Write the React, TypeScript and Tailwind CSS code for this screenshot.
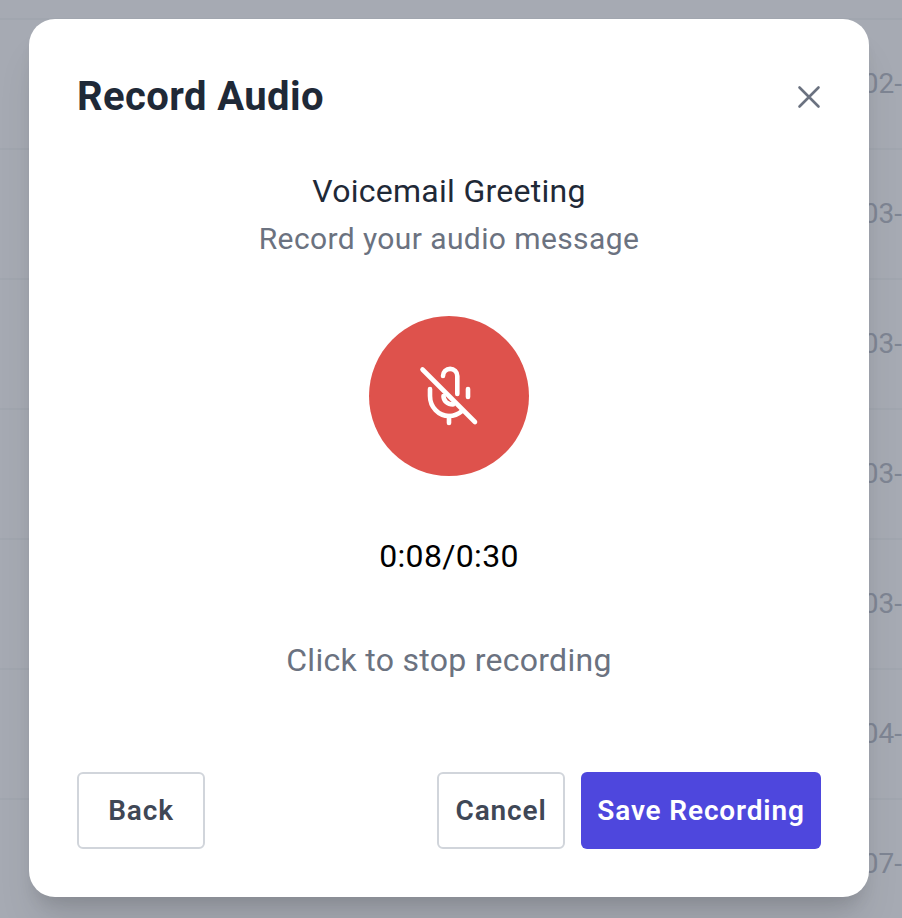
const rows = ['2023-02-14', '2023-03-02', '2023-03-09', '2023-03-21', '2023-03-28', '2023-04-11', '2023-07-05'];

function MicOffIcon() {
  return (
    <svg width="64" height="64" viewBox="0 0 64 64" fill="none" stroke="white" strokeWidth="4.6" strokeLinecap="round" strokeLinejoin="round">
      <path d="M5.5 5.5L58 58" />
      <path d="M26 12a7 7 0 0 1 14.3 0V30" />
      <path d="M26.5 32c0 5 4 8.5 9.5 8.5" />
      <path d="M13 25v7c0 11 8.5 20 19 20c5 0 9.5 -2 13 -5" />
      <path d="M51 25v8" />
      <path d="M32 52v7" />
    </svg>
  );
}

function CloseIcon() {
  return (
    <svg width="38" height="38" viewBox="0 0 38 38" fill="none" stroke="#6b7280" strokeWidth="2.6" strokeLinecap="round">
      <path d="M9.5 9.5L28.5 28.5M28.5 9.5L9.5 28.5" />
    </svg>
  );
}

export default function App() {
  return (
    <div className="relative h-[918px] w-[902px] overflow-hidden bg-white font-['Roboto',sans-serif]">
      {/* table behind the dialog */}
      <div className="pt-[18px]">
        {rows.map((date) => (
          <div key={date} className="flex h-[130px] items-center whitespace-nowrap border-t-2 border-[#f3f4f6] pb-[1px] pl-[792px] text-[28px] text-[#9ca3af]">
            {date}
          </div>
        ))}
      </div>

      <div className="absolute inset-0 flex items-center justify-center bg-[#6b7280]/60 pb-[2px] pr-1">
        {/* dialog */}
        <div className="flex h-[878px] w-[840px] flex-col rounded-[26px] bg-white px-12 pb-12 pt-12 shadow-[0_32px_40px_-8px_rgba(0,0,0,0.1),0_13px_16px_-6px_rgba(0,0,0,0.1)]">
          <div className="flex items-center justify-between">
            <h2 className="text-[40px] font-bold leading-[60px] tracking-[0.4px] text-[#1f2937]">Record Audio</h2>
            <button className="-mr-[7px] flex items-center">
              <CloseIcon />
            </button>
          </div>

          <div className="mt-[42px] flex flex-1 flex-col items-center">
            <p className="text-[32px] leading-[45px] tracking-[0.28px] text-[#1f2937]">Voicemail Greeting</p>
            <p className="mt-[2px] text-[30px] leading-[45px] tracking-[0.4px] text-[#6b7280]">Record your audio message</p>

            <div className="mt-[55px] flex h-40 w-40 items-center justify-center rounded-full bg-[#de524c]">
              <MicOffIcon />
            </div>

            <p className="mt-[58px] text-[32px] leading-[45px] tracking-[0.33px] text-black">0:08/0:30</p>
            <p className="mt-[59px] text-[32px] leading-[45px] tracking-[0.28px] text-[#6b7280]">Click to stop recording</p>
          </div>

          <div className="flex items-center justify-between">
            <button className="flex h-[77px] w-[128px] items-center justify-center rounded-[6px] border-2 border-[#d1d5db] bg-white text-[28px] font-semibold tracking-[0.85px] text-[#3f4756]">
              Back
            </button>
            <div className="flex gap-4">
              <button className="flex h-[77px] w-[128px] items-center justify-center rounded-[6px] border-2 border-[#d1d5db] bg-white text-[28px] font-semibold tracking-[0.85px] text-[#3f4756]">
                Cancel
              </button>
              <button className="flex h-[77px] w-[240px] items-center justify-center rounded-[6px] bg-[#4e47dd] text-[28px] font-semibold tracking-[0.85px] text-white">
                Save Recording
              </button>
            </div>
          </div>
        </div>
      </div>
    </div>
  );
}
